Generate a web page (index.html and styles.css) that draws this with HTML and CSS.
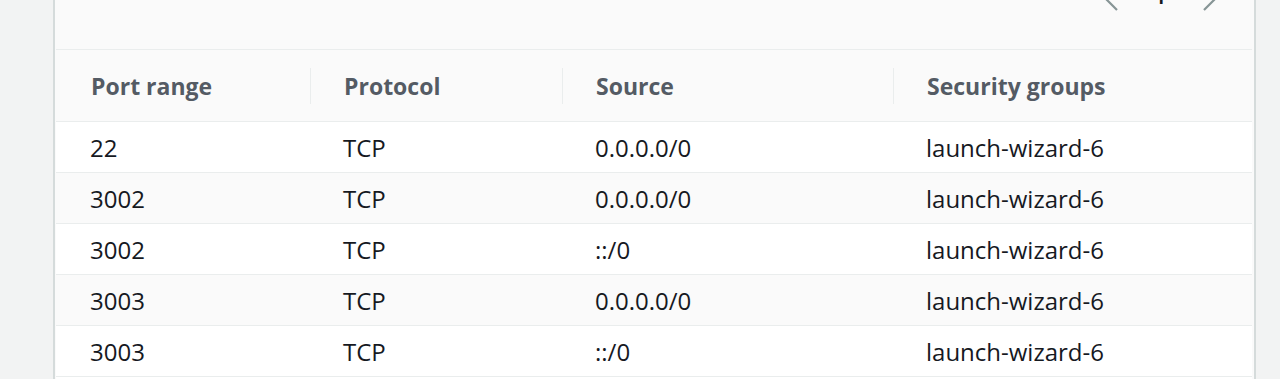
FILE: index.html
```html
<!DOCTYPE html>
<html lang="en">
<head>
<meta charset="utf-8">
<title>Inbound rules</title>
<link rel="stylesheet" href="styles.css">
</head>
<body>
<div class="page">
  <section class="card">
    <div class="toolbar">
      <nav class="pager">
        <svg class="chev" width="24" height="34" viewBox="0 0 24 34"><path d="M20 2 L5 17 L20 32" fill="none" stroke="#879596" stroke-width="2.2"/></svg>
        <span class="pagenum">1</span>
        <svg class="chev" width="24" height="34" viewBox="0 0 24 34"><path d="M4 2 L19 17 L4 32" fill="none" stroke="#879596" stroke-width="2.2"/></svg>
      </nav>
    </div>
    <table class="rules">
      <colgroup>
        <col class="c1"><col class="c2"><col class="c3"><col class="c4">
      </colgroup>
      <thead>
        <tr>
          <th><span class="th-in">Port range</span></th>
          <th><span class="th-in sep">Protocol</span></th>
          <th><span class="th-in sep">Source</span></th>
          <th><span class="th-in sep">Security groups</span></th>
        </tr>
      </thead>
      <tbody>
        <tr><td>22</td><td>TCP</td><td>0.0.0.0/0</td><td>launch-wizard-6</td></tr>
        <tr><td>3002</td><td>TCP</td><td>0.0.0.0/0</td><td>launch-wizard-6</td></tr>
        <tr><td>3002</td><td>TCP</td><td>::/0</td><td>launch-wizard-6</td></tr>
        <tr><td>3003</td><td>TCP</td><td>0.0.0.0/0</td><td>launch-wizard-6</td></tr>
        <tr><td>3003</td><td>TCP</td><td>::/0</td><td>launch-wizard-6</td></tr>
        <tr class="blank"><td></td><td></td><td></td><td></td></tr>
      </tbody>
    </table>
  </section>
</div>
</body>
</html>
```

FILE: styles.css
```css
html, body {
  margin: 0;
  padding: 0;
  background: #f2f3f3;
  font-family: "Open Sans", "Noto Sans", sans-serif;
  overflow: hidden;
}

.page {
  padding: 0 24px 0 53px;
  height: 379px;
  overflow: hidden;
}

.card {
  background: #fafafa;
  border-left: 2px solid #d5dbdb;
  border-right: 2px solid #d5dbdb;
  width: 1199px;
  height: 379px;
  overflow: hidden;
}

.toolbar {
  height: 49px;
  border-bottom: 1px solid #eaeded;
  margin-left: 1px;
  margin-right: 2px;
  display: flex;
  justify-content: flex-end;
  align-items: flex-start;
}

.pager {
  display: flex;
  align-items: center;
  gap: 33px;
  margin-top: -22px;
  margin-right: 28px;
}

.pagenum {
  font-size: 23px;
  font-weight: 600;
  color: #16191f;
  line-height: 34px;
}

.rules {
  border-collapse: collapse;
  table-layout: fixed;
  width: 1196px;
  margin-left: 1px;
}

.c1 { width: 254px; }
.c2 { width: 252px; }
.c3 { width: 331px; }
.c4 { width: auto; }

.rules th {
  height: 71px;
  padding: 0;
  background: #fafafa;
  border-bottom: 1px solid #eaeded;
  text-align: left;
  font-size: 23px;
  font-weight: 700;
  color: #545b64;
}

.th-in {
  display: flex;
  align-items: center;
  height: 36px;
  padding-left: 35px;
}

.th-in.sep {
  border-left: 1px solid #eaeded;
  padding-left: 33px;
}

.rules td {
  height: 50px;
  padding: 0 0 0 34px;
  border-bottom: 1px solid #eaeded;
  font-size: 24px;
  color: #16191f;
  background: #ffffff;
}

.rules td + td {
  padding-left: 33px;
}

.rules tbody tr:nth-child(even) td {
  background: #fafafa;
}

.rules tbody tr.blank td {
  background: #ffffff;
}
```
